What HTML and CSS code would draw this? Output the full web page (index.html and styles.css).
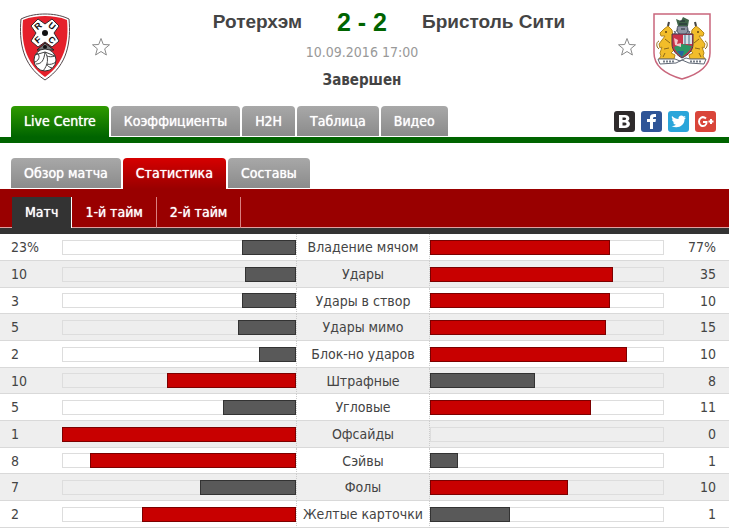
FILE: index.html
```
<!DOCTYPE html>
<html lang="ru">
<head>
    <meta charset="UTF-8">
    <meta name="viewport" content="width=device-width, initial-scale=1.0">
    <title>Ротерхэм - Бристоль Сити</title>
    <link rel="stylesheet" href="styles.css">
</head>
<body>
    <div class="page">
        <!-- Match header -->
        <header class="match">
            <svg class="crest" width="52" height="68" viewBox="0 0 52 68" role="img" aria-label="Ротерхэм">
                <path d="M26 1C33 1 42 2 50 6C52 28 49 52 26 67C3 52 0 28 2 6C10 2 19 1 26 1Z" fill="#fff" stroke="#54464a"/>
                <path d="M26 3C33 3 41 4 48 7C50 29 46 50 26 64C6 50 2 29 4 7C11 4 19 3 26 3Z" fill="#e5202b"/>
                <path d="M19 6L26 11L33 6L40 13L35 20L40 28L33 34L26 29L19 34L12 28L17 20L12 13Z" fill="#fff" stroke="#37292b"/>
                <circle cx="26" cy="20" r="3" fill="#111"/>
                <g class="crest-letters">
                    <text x="19" y="16" transform="rotate(-40 19 13)">R</text>
                    <text x="33" y="16" transform="rotate(40 33 13)">U</text>
                    <text x="19" y="30" transform="rotate(-40 19 27)">F</text>
                    <text x="33" y="30" transform="rotate(40 33 27)">C</text>
                </g>
                <path d="M18 37L26 30L35 37Z" fill="#777" stroke="#222"/>
                <circle cx="26" cy="34" r="2" fill="#111"/>
                <circle cx="26" cy="47" r="11" fill="#fff" stroke="#333"/>
                <path d="M16 42L26 39L36 43M17 51C23 51 25 47 26 39M26 39C30 45 29 52 24 58M36 43C33 44 30 44 28 43M37 49C34 51 31 52 28 51M18 40C21 42 21 47 16 49M33 55C30 54 28 53 28 51" fill="none" stroke="#444"/>
            </svg>
            <button class="star" type="button" aria-label="Добавить Ротерхэм в избранное">
                <svg width="20" height="20" viewBox="0 0 20 20"><path d="M10 1.500L12.300 7.500L18.500 7.800L13.700 11.800L15.400 18L10 14.500L4.600 18L6.300 11.800L1.500 7.800L7.700 7.500Z"/></svg>
            </button>
            <div class="match-info">
                <div class="score-line">
                    <h2 class="team team-home">Ротерхэм</h2>
                    <span class="score">2 - 2</span>
                    <h2 class="team">Бристоль Сити</h2>
                </div>
                <div class="date">10.09.2016 17:00</div>
                <div class="status">Завершен</div>
            </div>
            <button class="star" type="button" aria-label="Добавить Бристоль Сити в избранное">
                <svg width="20" height="20" viewBox="0 0 20 20"><path d="M10 1.500L12.300 7.500L18.500 7.800L13.700 11.800L15.400 18L10 14.500L4.600 18L6.300 11.800L1.500 7.800L7.700 7.500Z"/></svg>
            </button>
            <svg class="crest" width="58" height="68" viewBox="0 0 58 68" role="img" aria-label="Бристоль Сити">
                <path d="M1 1H57V40C57 54 43 62 29 66C15 62 1 54 1 40Z" fill="#fff" stroke="#c9667c" stroke-width="1.500"/>
                <!-- helmet -->
                <path d="M25 13C23 17 24 21 29 22C35 22 36 17 34 13Z" fill="#8f96a5" stroke="#454c5c"/>
                <path d="M23 6L28 8L30 4L36 7L35 13H25Z" fill="#3e6248"/>
                <path d="M27 8H32M26 11H34M28 16H32" stroke="#1e2735"/>
                <path d="M20 22L25 16M38 22L34 16M21 18L24 22M37 18L34 22" stroke="#555d70" fill="none"/>
                <!-- unicorns -->
                <g id="unicorn">
                    <path d="M15 13L11 16L7 20L8 23L12 23L9 27L6 31L7 35L9 34L7 40L8 43L6 46H21L22 42L18 40L22 36L20 31L22 28L20 24L19 17Z" fill="#f2bd2a" stroke="#b3871d"/>
                    <path d="M15 13L16 9" stroke="#444" stroke-width="2"/>
                    <path d="M6 36C3 34 3 29 6 28M12 26L17 30M11 36L16 35M12 40L10 44" stroke="#8b6818" fill="none"/>
                    <circle cx="13" cy="19" r="1" fill="#60440e"/>
                </g>
                <use href="#unicorn" transform="translate(58 0) scale(-1 1)"/>
                <!-- shield -->
                <path d="M19 21H40V31C40 38 35 42 29 45C24 42 19 38 19 31Z" fill="#c93249" stroke="#42394e"/>
                <path d="M30 22H39V31H30Z" fill="#d6e1e8"/>
                <path d="M32 22V32M36 22V32" stroke="#427187"/>
                <path d="M21 34L29 31L39 33C37 38 33 41 29 44C25 41 22 38 21 34Z" fill="#2b9665"/>
                <path d="M24 38L31 38L29 44Z" fill="#2764a0"/>
                <path d="M21 25L25 27L24 31L28 30V34L22 32Z" fill="#f2c5cb"/>
                <!-- ribbon -->
                <path d="M5 46L22 46L27 48L33 45L37 46L53 46L51 51L36 50L29 47L23 50L7 51Z" fill="#fff" stroke="#606875"/>
                <path d="M10 48.500H21M37 48.500H48" stroke="#767e89" stroke-width="2" stroke-dasharray="2 1"/>
            </svg>
        </header>

        <!-- Main tabs -->
        <div class="top-bar">
            <nav class="tabs main-tabs">
                <a href="#live" class="active">Live Centre</a>
                <a href="#odds">Коэффициенты</a>
                <a href="#h2h">H2H</a>
                <a href="#table">Таблица</a>
                <a href="#video">Видео</a>
            </nav>
            <div class="social">
                <a href="#vk" class="vk" aria-label="ВКонтакте">
                    <svg width="21" height="21" viewBox="0 0 21 21"><path fill-rule="evenodd" d="M5 4H11C16 4 16.500 9 13.500 10C17.500 11 16.500 17 11 17H5ZM8.500 6.500V9H11C12.500 9 12.500 6.500 11 6.500ZM8.500 11.500V14.500H11C13 14.500 13 11.500 11 11.500Z"/></svg>
                </a>
                <a href="#facebook" class="fb" aria-label="Facebook">
                    <svg width="21" height="21" viewBox="0 0 21 21"><path d="M9 18V11H6V8H9V6C9 3.500 11 2.500 15 3V6C12.500 5.800 12 6 12 8H15L14.500 11H12V18Z"/></svg>
                </a>
                <a href="#twitter" class="tw" aria-label="Twitter">
                    <svg width="21" height="21" viewBox="0 0 21 21"><path d="M4 5C6 7 8 8 10.500 8C10 4.500 14 3.500 15.500 5.500L17.500 5L16.300 7L18 6.800L16.500 8.500C16.500 15 9.500 18 3.500 15C5.500 15 7 14.500 8 13.700C6.500 13.500 5.500 12.700 5 11.500L6.500 11.400C4.800 10.800 4 9.700 4 8.300L5.400 8.700C3.800 7.400 3.500 6.200 4 5Z"/></svg>
                </a>
                <a href="#google" class="gp" aria-label="Google+">
                    <svg width="21" height="21" viewBox="0 0 21 21"><path class="stroke" d="M11 7.500C7.500 4.500 4 7 4 10.500C4 14.500 7.500 16 10 14.500C11.300 13.700 11.700 12.500 11.500 11H8"/><path class="stroke" d="M16 8V13M13.500 10.500H18.500"/></svg>
                </a>
            </div>
        </div>

        <!-- Detail tabs -->
        <nav class="tabs detail-tabs">
            <a href="#summary">Обзор матча</a>
            <a href="#stats" class="active">Статистика</a>
            <a href="#lineups">Составы</a>
        </nav>
        <nav class="periods">
            <a href="#match" class="active">Матч</a>
            <a href="#first">1-й тайм</a>
            <a href="#second">2-й тайм</a>
        </nav>

        <!-- Statistics -->
        <table class="stats">
            <colgroup>
                <col class="col-home">
                <col>
                <col class="col-label">
                <col>
                <col class="col-away">
            </colgroup>
            <tbody>
                <tr>
                    <td class="home">23%</td>
                    <td><div class="bar left"><div class="fill" style="width: 23%"></div></div></td>
                    <th scope="row">Владение мячом</th>
                    <td><div class="bar"><div class="fill win" style="width: 77%"></div></div></td>
                    <td class="away">77%</td>
                </tr>
                <tr>
                    <td class="home">10</td>
                    <td><div class="bar left"><div class="fill" style="width: 22%"></div></div></td>
                    <th scope="row">Удары</th>
                    <td><div class="bar"><div class="fill win" style="width: 78%"></div></div></td>
                    <td class="away">35</td>
                </tr>
                <tr>
                    <td class="home">3</td>
                    <td><div class="bar left"><div class="fill" style="width: 23%"></div></div></td>
                    <th scope="row">Удары в створ</th>
                    <td><div class="bar"><div class="fill win" style="width: 77%"></div></div></td>
                    <td class="away">10</td>
                </tr>
                <tr>
                    <td class="home">5</td>
                    <td><div class="bar left"><div class="fill" style="width: 25%"></div></div></td>
                    <th scope="row">Удары мимо</th>
                    <td><div class="bar"><div class="fill win" style="width: 75%"></div></div></td>
                    <td class="away">15</td>
                </tr>
                <tr>
                    <td class="home">2</td>
                    <td><div class="bar left"><div class="fill" style="width: 16%"></div></div></td>
                    <th scope="row">Блок-но ударов</th>
                    <td><div class="bar"><div class="fill win" style="width: 84%"></div></div></td>
                    <td class="away">10</td>
                </tr>
                <tr>
                    <td class="home">10</td>
                    <td><div class="bar left"><div class="fill win" style="width: 55%"></div></div></td>
                    <th scope="row">Штрафные</th>
                    <td><div class="bar"><div class="fill" style="width: 45%"></div></div></td>
                    <td class="away">8</td>
                </tr>
                <tr>
                    <td class="home">5</td>
                    <td><div class="bar left"><div class="fill" style="width: 31%"></div></div></td>
                    <th scope="row">Угловые</th>
                    <td><div class="bar"><div class="fill win" style="width: 69%"></div></div></td>
                    <td class="away">11</td>
                </tr>
                <tr>
                    <td class="home">1</td>
                    <td><div class="bar left"><div class="fill win" style="width: 100%"></div></div></td>
                    <th scope="row">Офсайды</th>
                    <td><div class="bar"></div></td>
                    <td class="away">0</td>
                </tr>
                <tr>
                    <td class="home">8</td>
                    <td><div class="bar left"><div class="fill win" style="width: 88%"></div></div></td>
                    <th scope="row">Сэйвы</th>
                    <td><div class="bar"><div class="fill" style="width: 12%"></div></div></td>
                    <td class="away">1</td>
                </tr>
                <tr>
                    <td class="home">7</td>
                    <td><div class="bar left"><div class="fill" style="width: 41%"></div></div></td>
                    <th scope="row">Фолы</th>
                    <td><div class="bar"><div class="fill win" style="width: 59%"></div></div></td>
                    <td class="away">10</td>
                </tr>
                <tr>
                    <td class="home">2</td>
                    <td><div class="bar left"><div class="fill win" style="width: 66%"></div></div></td>
                    <th scope="row">Желтые карточки</th>
                    <td><div class="bar"><div class="fill" style="width: 34%"></div></div></td>
                    <td class="away">1</td>
                </tr>
            </tbody>
        </table>
    </div>
</body>
</html>
```
FILE: styles.css
```
* {
    box-sizing: border-box;
}
body {
    margin: 0;
    background-color: #fff;
    font-family: "DejaVu Sans Condensed", "DejaVu Sans", sans-serif;
    font-size: 14px;
    color: #444;
}
a {
    text-decoration: none;
}
svg {
    display: block;
}
.page {
    padding-right: 1px;
}

/* Match header */
.match {
    display: flex;
    align-items: flex-start;
    padding: 8px 18px 0 19px;
}
.crest {
    margin-top: 5px;
    flex: none;
}
.crest-letters {
    font-family: "Liberation Sans", Arial, sans-serif;
    font-size: 9px;
    font-weight: bold;
    fill: #111;
    text-anchor: middle;
}
.star {
    flex: none;
    margin: 29px 16px 0 20px;
    padding: 0;
    border: none;
    background: none;
    cursor: pointer;
}
.star path {
    fill: #fff;
    stroke: #888;
}
.match-info {
    flex: 1;
    text-align: center;
}
.score-line {
    display: grid;
    grid-template-columns: 1fr auto 1fr;
    align-items: center;
    gap: 35px;
    font-family: "Liberation Sans", Arial, sans-serif;
}
.team {
    margin: 0;
    font-size: 19px;
    line-height: 28px;
    text-align: left;
    white-space: nowrap;
}
.team-home {
    text-align: right;
}
.score {
    font-size: 25px;
    line-height: 28px;
    font-weight: bold;
    color: #006400;
}
.date {
    margin-top: 6px;
    line-height: 20px;
    color: #999;
}
.status {
    margin-top: 8px;
    font-size: 15px;
    line-height: 20px;
    font-weight: bold;
}

/* Tabs */
.tabs {
    display: flex;
    gap: 2px;
}
.tabs a,
.periods a {
    padding: 0 13px;
    color: #fff;
    line-height: 31px;
    text-shadow: 0 0 1px #fff;
}
.tabs a {
    height: 31px;
    border-radius: 4px 4px 0 0;
    border-bottom: 1px solid #fff;
    background: linear-gradient(#a8a8a8, #8b8b8b);
}
.top-bar {
    display: flex;
    justify-content: space-between;
    margin-top: 16px;
    padding: 0 13px 0 11px;
    border-bottom: 6px solid #006400;
}
.main-tabs .active {
    border-bottom: none;
    background: linear-gradient(#2f9a00, #006400);
}
.social {
    display: flex;
    gap: 6px;
    padding-top: 5px;
}
.social a {
    height: 21px;
    border-radius: 3px;
}
.social path {
    fill: #fff;
}
.social .stroke {
    fill: none;
    stroke: #fff;
    stroke-width: 2;
}
.vk {
    background-color: #2f2b2c;
}
.fb {
    background-color: #2f5597;
}
.tw {
    background-color: #2aa5da;
}
.gp {
    background-color: #d9453a;
}
.detail-tabs {
    margin-top: 15px;
    padding-left: 11px;
}
.detail-tabs .active {
    border-bottom: none;
    background: linear-gradient(#d60000, #990000);
}
.periods {
    display: flex;
    padding: 8px 0 0 12px;
    background: linear-gradient(#e0a0a0, #e0a0a0) bottom / 100% 1px no-repeat #900;
    border-bottom: 6px solid #333;
}
.periods a {
    border-right: 1px solid #d98080;
}
.periods .active {
    border-right-color: #fff;
    background-color: #333;
}

/* Statistics */
.stats {
    width: 100%;
    table-layout: fixed;
    border-collapse: separate;
    border-spacing: 0;
}
.col-home {
    width: 62px;
}
.col-label {
    width: 134px;
}
.col-away {
    width: 65px;
}
.stats td,
.stats th {
    height: 27px;
    padding: 0;
    border-bottom: 1px solid #d9d9d9;
    font-weight: normal;
    line-height: 20px;
}
.stats tr:nth-child(3n) td,
.stats tr:nth-child(3n) th {
    height: 26px;
}
.stats tr:nth-child(even) {
    background-color: #eee;
}
.stats th {
    border-left: 1px dotted #ccc;
    border-right: 1px dotted #ccc;
    white-space: nowrap;
}
.stats .home {
    padding-left: 11px;
}
.stats .away {
    padding-right: 13px;
    text-align: right;
}
.bar {
    display: flex;
    height: 15px;
    box-shadow: inset 0 0 0 1px #ddd;
}
.bar.left {
    justify-content: flex-end;
}
.fill {
    border: 1px solid #333;
    background-color: #595959;
}
.fill.win {
    border-color: #7c0000;
    background-color: #c80000;
}
```
